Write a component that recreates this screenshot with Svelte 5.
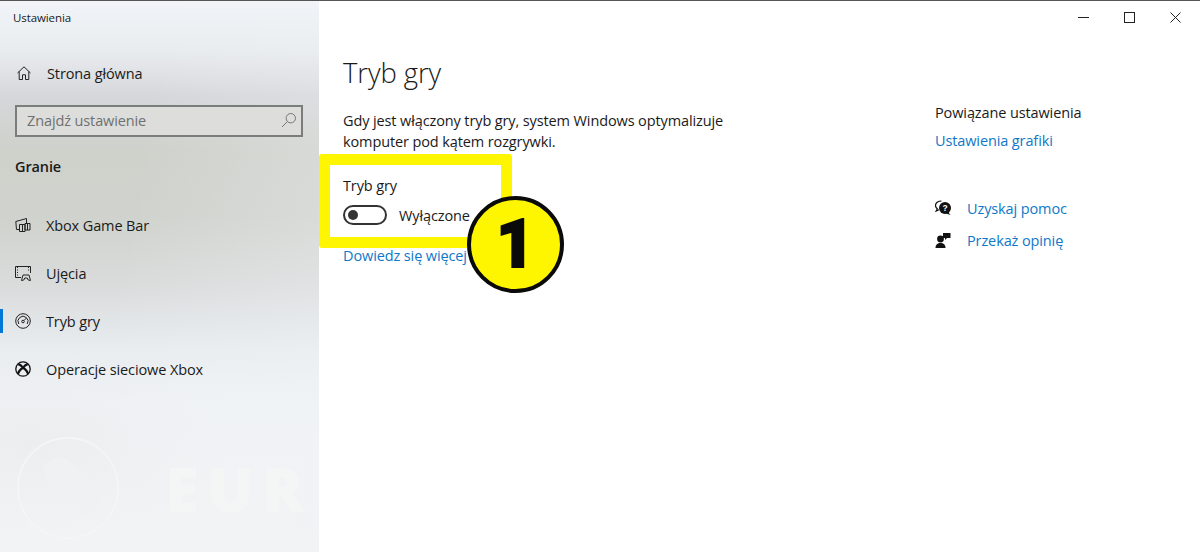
<script lang="ts">
  const nav = [
    { id: 'bar', label: 'Xbox Game Bar' },
    { id: 'shot', label: 'Ujęcia' },
    { id: 'mode', label: 'Tryb gry', active: true },
    { id: 'net', label: 'Operacje sieciowe Xbox' }
  ]
</script>

<div class="window">
  <aside class="sidebar">
    <div class="watermark" aria-hidden="true">
      <svg width="106" height="106" viewBox="0 0 108 108" fill="none">
        <circle cx="54" cy="54" r="51" stroke="#f4f5f5" stroke-width="2" />
        <path d="M28 30l18-8 14 8 10 14-12 8-8 16-14-8-4-14zM66 66l14-8 6 10-12 14-10-6z" fill="#f0f1f2" />
      </svg>
      <span>EUR</span>
    </div>

    <div class="app-title">Ustawienia</div>

    <a class="home" href="#home">
      <svg class="icon" viewBox="0 0 16 16" fill="none" stroke="#222" stroke-width="1">
        <path d="M1.500 8 8 1.800 14.500 8M3.200 6.600v7.900h3.300V9.800h3v4.700h3.300V6.600" />
      </svg>
      <span>Strona główna</span>
    </a>

    <div class="search">
      <span>Znajdź ustawienie</span>
      <svg width="16" height="16" viewBox="0 0 16 16" fill="none" stroke="#777" stroke-width="1">
        <circle cx="9.800" cy="6.200" r="4.700" />
        <path d="M6.400 9.600 1 15" />
      </svg>
    </div>

    <h2 class="group">Granie</h2>

    <nav>
      {#each nav as item}
        <a class="nav-item" class:active={item.active} href="#{item.id}">
          {#if item.id === 'bar'}
            <svg class="icon" viewBox="0 0 16 16" fill="none" stroke="#222" stroke-width="1">
              <path d="M4.500 12.500H1.500L.8 4.500 11.500 1.500V6" />
              <path d="M4.500 14.500V7.500h5.500v7zM10 13V6.500h5v6.500z" />
              <path d="M7.500 7.500v7M12.500 6.500v6.500" />
            </svg>
          {:else if item.id === 'shot'}
            <svg class="icon" viewBox="0 0 16 16" fill="none" stroke="#222" stroke-width="1">
              <path d="M6 12.500H.5v-11h15V8" />
              <path d="M2.500 2v9.500M13.500 2v5" stroke-dasharray="1 1.500" />
              <path d="M6.500 15.500 8 10h6l1.500 5.500-2.300-.5-1-2H9.800l-1 2z" />
            </svg>
          {:else if item.id === 'mode'}
            <svg class="icon" viewBox="0 0 16 16" fill="none" stroke="#222" stroke-width="1">
              <circle cx="8" cy="8" r="7.300" />
              <path d="M3.800 11A5 5 0 1 1 12.200 11" />
              <circle cx="8" cy="8.500" r="1.300" />
              <path d="m9 7.500 2.500-2.500" />
            </svg>
          {:else}
            <svg class="icon" viewBox="0 0 16 16" fill="none" stroke="#111" stroke-width="1.300">
              <circle cx="8" cy="8" r="7.200" />
              <path d="M3.200 3.200c2 .4 3.500 1.800 4.800 3.400 1.300-1.600 2.800-3 4.800-3.400M2.800 13c.7-2.500 2.800-4.800 5.200-6.400 2.400 1.600 4.500 3.900 5.200 6.400" stroke-width="2.200" />
            </svg>
          {/if}
          <span>{item.label}</span>
        </a>
      {/each}
    </nav>
  </aside>

  <main class="content">
    <div class="window-buttons">
      <svg width="11" height="11" viewBox="0 0 11 11" stroke="#222" fill="none"><path d="M0 5.500h11" /></svg>
      <svg width="11" height="11" viewBox="0 0 11 11" stroke="#222" fill="none"><rect x=".5" y=".5" width="10" height="10" /></svg>
      <svg width="11" height="11" viewBox="0 0 11 11" stroke="#222" fill="none"><path d="m.5.500 10 10M10.500.500l-10 10" /></svg>
    </div>

    <div class="columns">
      <section class="settings">
        <h1>Tryb gry</h1>
        <p>Gdy jest włączony tryb gry, system Windows optymalizuje komputer pod kątem rozgrywki.</p>
        <div class="field-label">Tryb gry</div>
        <div class="toggle-row">
          <span class="toggle"><span class="knob"></span></span>
          <span>Wyłączone</span>
        </div>
        <a class="link more" href="#more">Dowiedz się więcej</a>
      </section>

      <section class="related">
        <div class="related-title">Powiązane ustawienia</div>
        <a class="link" href="#graphics">Ustawienia grafiki</a>

        <ul class="help">
          <li>
            <svg class="icon" viewBox="0 0 16 16">
              <path d="M6.500 1C3 1 .5 3 .5 5.500c0 1.300.7 2.500 1.800 3.300L1.200 11l2.800-1.200" fill="none" stroke="#111" stroke-width="1.200" />
              <circle cx="10" cy="8" r="6" fill="#111" />
              <path d="m13 12 2.500 3-4.500-1.500z" fill="#111" />
              <text x="10" y="11" text-anchor="middle" font-size="8.500" font-weight="700" fill="#fff" font-family="Liberation Sans, sans-serif">?</text>
            </svg>
            <a class="link" href="#help">Uzyskaj pomoc</a>
          </li>
          <li>
            <svg class="icon" viewBox="0 0 16 16" fill="#111">
              <circle cx="5.500" cy="7" r="3.400" />
              <path d="M.5 16c0-3.500 2-5 5-5s5 1.500 5 5z" />
              <path d="M8 1h7.500v5H12l-2 2V6H8z" />
            </svg>
            <a class="link" href="#feedback">Przekaż opinię</a>
          </li>
        </ul>
      </section>
    </div>
  </main>

  <div class="callout-frame" aria-hidden="true"></div>
  <div class="callout-badge" aria-hidden="true">1</div>
</div>

<style>
  :global(body) {
    margin: 0;
    background: #fff;
  }

  .window {
    position: relative;
    display: flex;
    width: 1200px;
    height: 552px;
    box-sizing: border-box;
    overflow: hidden;
    border-top: 1px solid #555;
    font-family: "Open Sans", "Noto Sans", sans-serif;
    font-size: 14.500px;
    letter-spacing: -0.115px;
    color: #1a1a1a;
  }

  a {
    text-decoration: none;
    color: inherit;
  }

  .icon {
    flex: none;
    width: 16px;
    height: 16px;
  }

  /* sidebar */
  .sidebar {
    position: relative;
    flex: none;
    width: 319px;
    height: 100%;
    overflow: hidden;
    background:
      radial-gradient(ellipse 200px 90px at 30px 440px, rgba(232, 232, 232, 0.5), rgba(232, 232, 232, 0)),
      linear-gradient(100deg, rgba(255, 255, 255, 0) 40%, rgba(240, 243, 246, 0.35) 100%),
      linear-gradient(180deg, #f1f4f8 0, #e9ecef 50px, #d6d7da 95px, #cfd1cb 150px, #d0d2cd 215px, #dadcdc 285px, #e9edf0 350px, #f0f3f6 400px, #f2f3f4 552px);
  }

  .app-title {
    position: relative;
    height: 34px;
    padding: 9px 0 0 13px;
    box-sizing: border-box;
    font-size: 11.500px;
    letter-spacing: -0.1px;
  }

  .home {
    position: relative;
    display: flex;
    align-items: center;
    gap: 15px;
    height: 48px;
    margin-top: 14px;
    padding-left: 16px;
  }

  .search {
    position: relative;
    display: flex;
    align-items: center;
    justify-content: space-between;
    box-sizing: border-box;
    width: 288px;
    height: 32px;
    margin: 8px 0 0 15px;
    padding: 0 4px 2px 10px;
    border: 2px solid #7b7d7c;
    background: #dddedb;
    color: #6f706f;
  }

  .group {
    position: relative;
    margin: 0;
    height: 51px;
    padding: 20px 0 0 15px;
    box-sizing: border-box;
    font-size: 14.500px;
    font-weight: 600;
  }

  nav {
    position: relative;
    display: flex;
    flex-direction: column;
    margin-top: 13px;
  }

  .nav-item {
    display: flex;
    align-items: center;
    gap: 15px;
    height: 48px;
    padding-left: 15px;
  }

  .nav-item.active {
    background: linear-gradient(#0078d7, #0078d7) 0 center / 3px 24px no-repeat;
  }

  .watermark {
    position: absolute;
    left: 15px;
    top: 434px;
    display: flex;
    align-items: center;
    gap: 44px;
    color: #f4f5f5;
    font-size: 62px;
    font-weight: 800;
    letter-spacing: 8px;
    white-space: nowrap;
  }

  /* main area */
  .content {
    position: relative;
    flex: 1;
    min-width: 0;
  }

  .window-buttons {
    position: absolute;
    top: 11px;
    right: 19px;
    display: flex;
    gap: 35px;
  }

  .columns {
    display: flex;
    padding: 49px 0 0 24px;
  }

  .settings {
    width: 592px;
    flex: none;
  }

  h1 {
    margin: 0;
    height: 46px;
    font-size: 27.500px;
    line-height: 46px;
    font-weight: 300;
    letter-spacing: -0.1px;
    color: #1a1a1a;
  }

  .settings p {
    width: 400px;
    margin: 14px 0 0;
    line-height: 21px;
  }

  .field-label {
    margin-top: 24px;
    line-height: 20px;
  }

  .toggle-row {
    display: flex;
    align-items: center;
    gap: 12px;
    margin-top: 9px;
    height: 20px;
  }

  .toggle {
    display: flex;
    align-items: center;
    box-sizing: border-box;
    width: 44px;
    height: 20px;
    padding-left: 3px;
    border: 2px solid #333;
    border-radius: 10px;
  }

  .knob {
    width: 10px;
    height: 10px;
    border-radius: 50%;
    background: #333;
  }

  .link {
    color: #0f78c8;
  }

  .more {
    display: block;
    margin-top: 21px;
  }

  .related {
    padding-top: 53px;
  }

  .related-title {
    line-height: 20px;
    margin-bottom: 8px;
  }

  .help {
    list-style: none;
    margin: 48px 0 0;
    padding: 0;
    display: flex;
    flex-direction: column;
    gap: 12px;
  }

  .help li {
    display: flex;
    align-items: center;
    gap: 16px;
    height: 20px;
  }

  /* annotation drawn on top of the screenshot */
  .callout-frame {
    position: absolute;
    left: 319px;
    top: 153px;
    box-sizing: border-box;
    width: 193px;
    height: 94px;
    border: 11px solid #fef600;
    border-radius: 3px;
  }

  .callout-badge {
    position: absolute;
    left: 467px;
    top: 195px;
    box-sizing: border-box;
    display: flex;
    align-items: center;
    justify-content: center;
    width: 97px;
    height: 97px;
    border: 4px solid #0a0a0a;
    border-radius: 50%;
    background: #fef600;
    color: #0a0a0a;
    font-family: Roboto, "Liberation Sans", sans-serif;
    font-size: 66px;
    font-weight: 900;
    letter-spacing: 0;
    -webkit-text-stroke: 2px #0a0a0a;
  }
</style>
